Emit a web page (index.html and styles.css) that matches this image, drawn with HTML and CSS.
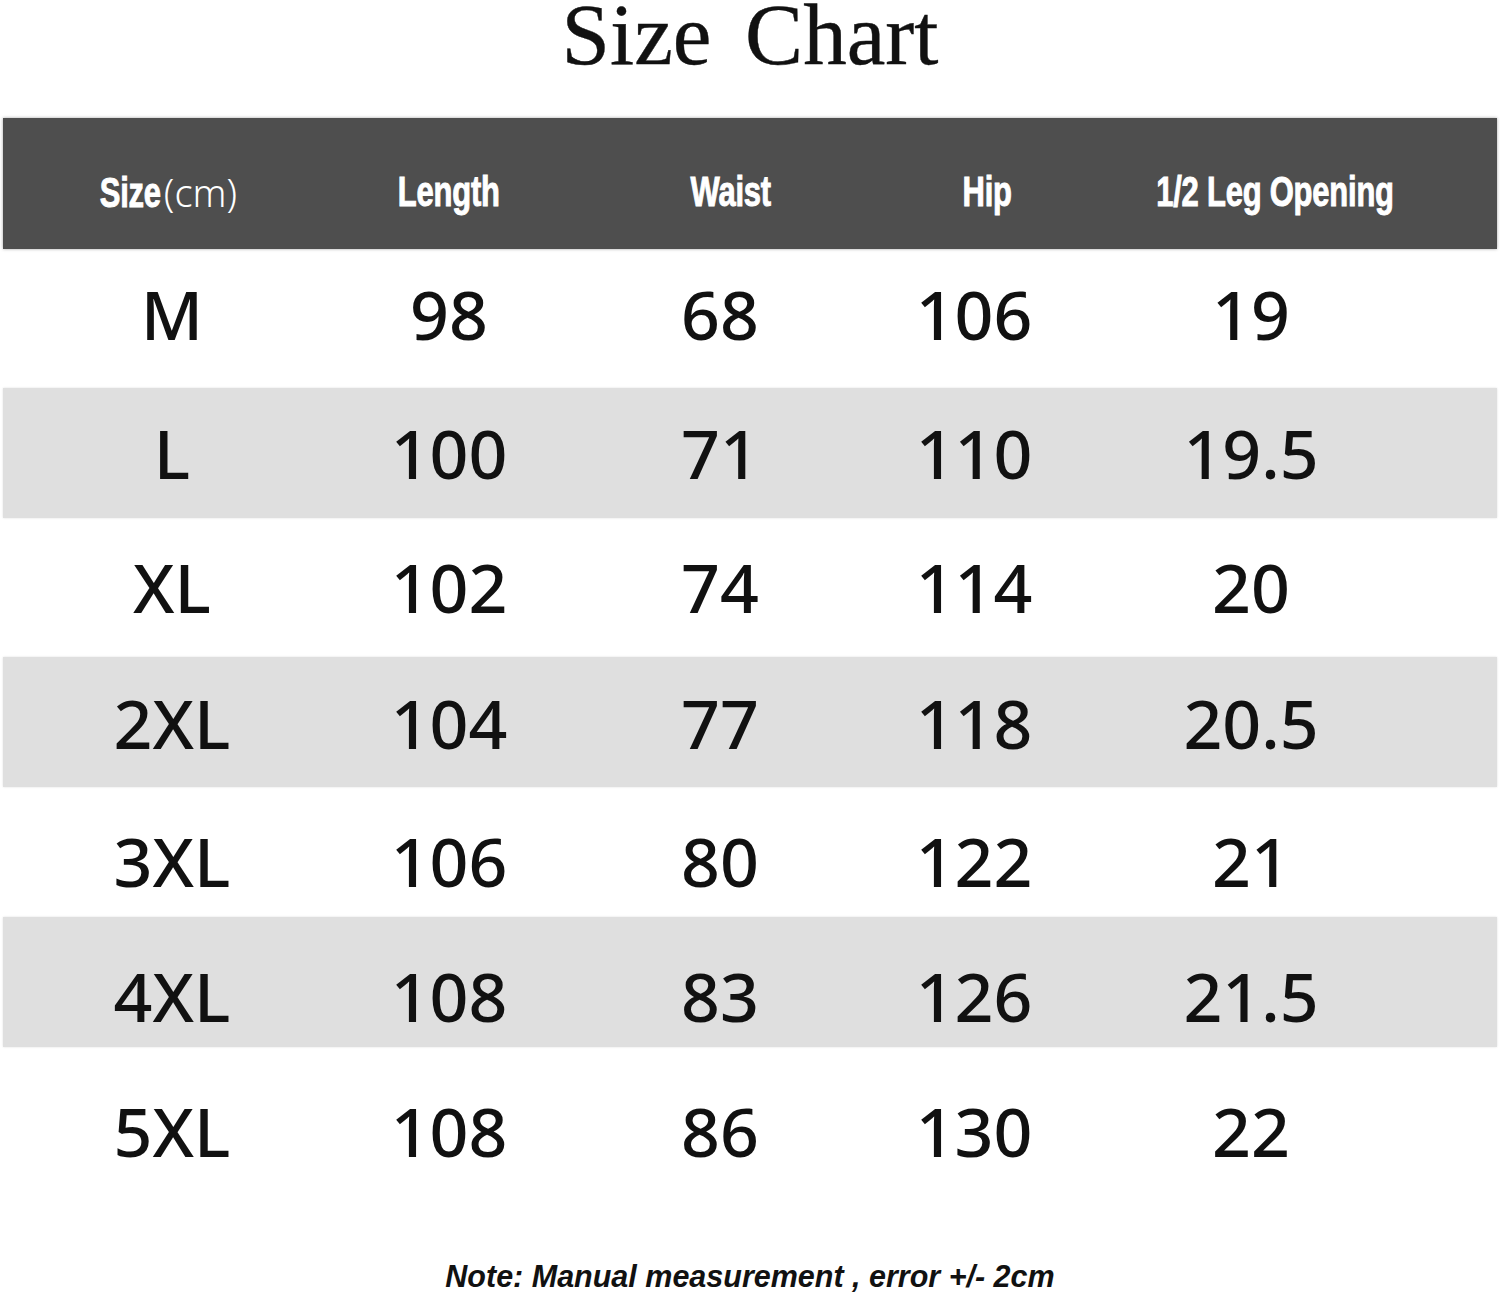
FILE: index.html
```html
<!DOCTYPE html>
<html>
<head>
<meta charset="utf-8">
<link rel="stylesheet" href="styles.css">
</head>
<body>
<div class="page">
  <h1 class="title">Size Chart</h1>
  <div class="table">
    <div class="head">
      <div class="hc hc1"><span class="imp imp-size">Size</span><span class="thin">(cm)</span></div>
      <div class="hc hc2"><span class="imp">Length</span></div>
      <div class="hc hc3"><span class="imp">Waist</span></div>
      <div class="hc hc4"><span class="imp">Hip</span></div>
      <div class="hc hc5"><span class="imp">1/2 Leg Opening</span></div>
    </div>
    <div class="row r1"><div>M</div><div>98</div><div>68</div><div>106</div><div>19</div></div>
    <div class="row alt r2"><div>L</div><div>100</div><div>71</div><div>110</div><div>19.5</div></div>
    <div class="row r3"><div>XL</div><div>102</div><div>74</div><div>114</div><div>20</div></div>
    <div class="row alt r4"><div>2XL</div><div>104</div><div>77</div><div>118</div><div>20.5</div></div>
    <div class="row r5"><div>3XL</div><div>106</div><div>80</div><div>122</div><div>21</div></div>
    <div class="row alt r6"><div>4XL</div><div>108</div><div>83</div><div>126</div><div>21.5</div></div>
    <div class="row r7"><div>5XL</div><div>108</div><div>86</div><div>130</div><div>22</div></div>
  </div>
  <p class="note">Note: Manual measurement , error +/- 2cm</p>
</div>
</body>
</html>
```

FILE: styles.css
```css
html, body {
  margin: 0;
  padding: 0;
  background: #ffffff;
}

.page {
  width: 1500px;
  height: 1298px;
  overflow: hidden;
  color: #111;
}

.title {
  margin: 0;
  height: 118px;
  font-family: "Liberation Serif", "DejaVu Serif", serif;
  font-weight: normal;
  font-size: 87px;
  line-height: 70px;
  text-align: center;
  word-spacing: 12px;
  color: #111;
  -webkit-text-stroke: 0.4px #111;
}

.table {
  padding: 0 3px;
}

.head,
.row {
  display: grid;
  grid-template-columns: 338px 216px 326px 182px 372px 1fr;
  justify-items: center;
  box-sizing: border-box;
}

.head {
  height: 131px;
  align-items: center;
  background: #4e4e4e;
  box-shadow: 0 0 3px rgba(0, 0, 0, 0.35);
  color: #ffffff;
  padding-top: 16px;
}

.hc {
  white-space: nowrap;
}

.imp {
  display: inline-block;
  font-family: "Liberation Sans", Arial, sans-serif;
  font-weight: 700;
  font-size: 43px;
  letter-spacing: -0.3px;
  -webkit-text-stroke: 1px #ffffff;
  transform: scaleX(0.72);
}

.imp-size {
  transform-origin: right center;
}

.thin {
  font-family: "Noto Sans", "Open Sans", sans-serif;
  font-weight: 300;
  font-size: 38px;
  margin-left: 3px;
}

.hc1 { padding-right: 31px; }
.hc3 { padding-left: 22px; }
.hc4 { padding-left: 26px; }
.hc5 { padding-left: 48px; }

.row {
  align-items: start;
  font-family: "Noto Sans", "Open Sans", sans-serif;
  font-size: 68px;
  line-height: 68px;
  font-weight: 500;
  color: #111;
}

.row.alt {
  background: #dfdfdf;
  box-shadow: 0 0 2px rgba(0, 0, 0, 0.12);
}

.r1 { height: 139px; padding-top: 31px; }
.r2 { height: 130px; padding-top: 31px; }
.r3 { height: 139px; padding-top: 35px; }
.r4 { height: 130px; padding-top: 32px; }
.r5 { height: 130px; padding-top: 40px; }
.r6 { height: 130px; padding-top: 45px; }
.r7 { height: 150px; padding-top: 50px; }

.note {
  margin: 0;
  padding-top: 62px;
  text-align: center;
  font-family: "Liberation Sans", Arial, sans-serif;
  font-weight: 700;
  font-style: italic;
  font-size: 30.5px;
  color: #111;
}
```
